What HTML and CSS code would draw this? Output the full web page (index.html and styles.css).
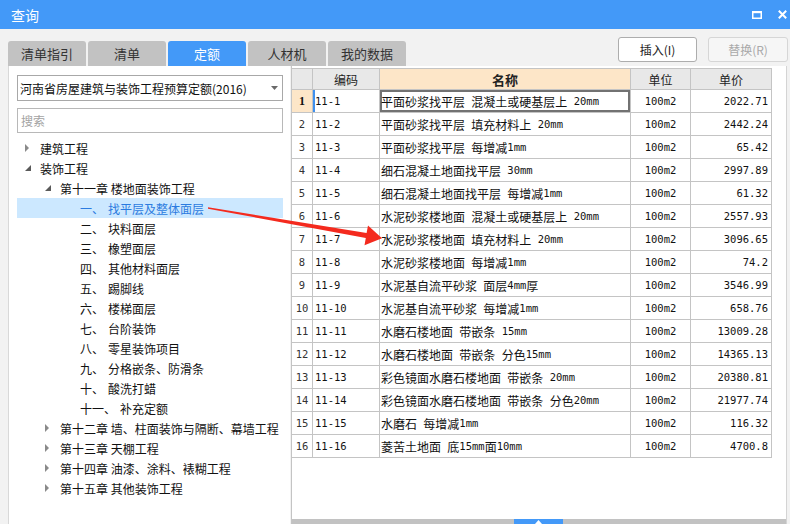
FILE: index.html
```html
<!DOCTYPE html>
<html lang="zh-CN">
<head>
<meta charset="utf-8">
<title>查询</title>
<link rel="stylesheet" href="styles.css">
</head>
<body>
<div class="titlebar">
  <span class="title">查询</span>
  <div class="winbtns">
    <svg class="ico-max" width="10" height="8" viewBox="0 0 10 8"><rect x="0.75" y="1" width="8.5" height="6.25" fill="none" stroke="#fff" stroke-width="1.5"/><rect x="0" y="0" width="10" height="2.2" fill="#fff"/></svg>
    <svg class="ico-close" width="9" height="9" viewBox="0 0 9 9"><path d="M0.8 0.8 L8.2 8.2 M8.2 0.8 L0.8 8.2" stroke="#fff" stroke-width="2"/></svg>
  </div>
</div>
<div class="toolbar">
  <div class="tabs">
    <div class="tab">清单指引</div>
    <div class="tab">清单</div>
    <div class="tab active">定额</div>
    <div class="tab">人材机</div>
    <div class="tab">我的数据</div>
  </div>
  <div class="actions">
    <div class="btn">插入(I)</div>
    <div class="btn disabled">替换(R)</div>
  </div>
</div>
<div class="main">
  <div class="left">
    <div class="select"><span>河南省房屋建筑与装饰工程预算定额(2016)</span><svg class="caret" width="7" height="4" viewBox="0 0 7 4"><polygon points="0,0 7,0 3.5,4" fill="#6a6a6a"/></svg></div>
    <div class="search">搜索</div>
    <div class="tree">
      <div class="row l0"><span class="tw"><svg width="5" height="8" viewBox="0 0 5 8"><polygon points="0,0 4,4 0,8" fill="#8a8a8a"/></svg></span>建筑工程</div>
      <div class="row l0"><span class="tw"><svg width="6" height="6" viewBox="0 0 6 6"><polygon points="6,0 6,6 0,6" fill="#5a5a5a"/></svg></span>装饰工程</div>
      <div class="row l1"><span class="tw"><svg width="6" height="6" viewBox="0 0 6 6"><polygon points="6,0 6,6 0,6" fill="#5a5a5a"/></svg></span>第十一章 楼地面装饰工程</div>
      <div class="row l2 sel"><span class="tw"></span><span class="num">一、</span>找平层及整体面层</div>
      <div class="row l2"><span class="tw"></span><span class="num">二、</span>块料面层</div>
      <div class="row l2"><span class="tw"></span><span class="num">三、</span>橡塑面层</div>
      <div class="row l2"><span class="tw"></span><span class="num">四、</span>其他材料面层</div>
      <div class="row l2"><span class="tw"></span><span class="num">五、</span>踢脚线</div>
      <div class="row l2"><span class="tw"></span><span class="num">六、</span>楼梯面层</div>
      <div class="row l2"><span class="tw"></span><span class="num">七、</span>台阶装饰</div>
      <div class="row l2"><span class="tw"></span><span class="num">八、</span>零星装饰项目</div>
      <div class="row l2"><span class="tw"></span><span class="num">九、</span>分格嵌条、防滑条</div>
      <div class="row l2"><span class="tw"></span><span class="num">十、</span>酸洗打蜡</div>
      <div class="row l2"><span class="tw"></span><span class="num">十一、</span>补充定额</div>
      <div class="row l1"><span class="tw"><svg width="5" height="8" viewBox="0 0 5 8"><polygon points="0,0 4,4 0,8" fill="#8a8a8a"/></svg></span>第十二章 墙、柱面装饰与隔断、幕墙工程</div>
      <div class="row l1"><span class="tw"><svg width="5" height="8" viewBox="0 0 5 8"><polygon points="0,0 4,4 0,8" fill="#8a8a8a"/></svg></span>第十三章 天棚工程</div>
      <div class="row l1"><span class="tw"><svg width="5" height="8" viewBox="0 0 5 8"><polygon points="0,0 4,4 0,8" fill="#8a8a8a"/></svg></span>第十四章 油漆、涂料、裱糊工程</div>
      <div class="row l1"><span class="tw"><svg width="5" height="8" viewBox="0 0 5 8"><polygon points="0,0 4,4 0,8" fill="#8a8a8a"/></svg></span>第十五章 其他装饰工程</div>
    </div>
  </div>
  <div class="right">
    <div class="grid">
      <div class="h"></div><div class="h">编码</div><div class="h hn">名称</div><div class="h">单位</div><div class="h">单价</div>

      <div class="c rn cur">1</div><div class="c code focus">11-1</div><div class="c name selcell">平面砂浆找平层<span class="a"> </span>混凝土或硬基层上<span class="a"> 20mm</span></div><div class="c unit">100m2</div><div class="c price">2022.71</div>
      <div class="c rn">2</div><div class="c code">11-2</div><div class="c name">平面砂浆找平层<span class="a"> </span>填充材料上<span class="a"> 20mm</span></div><div class="c unit">100m2</div><div class="c price">2442.24</div>
      <div class="c rn">3</div><div class="c code">11-3</div><div class="c name">平面砂浆找平层<span class="a"> </span>每增减<span class="a">1mm</span></div><div class="c unit">100m2</div><div class="c price">65.42</div>
      <div class="c rn">4</div><div class="c code">11-4</div><div class="c name">细石混凝土地面找平层<span class="a"> 30mm</span></div><div class="c unit">100m2</div><div class="c price">2997.89</div>
      <div class="c rn">5</div><div class="c code">11-5</div><div class="c name">细石混凝土地面找平层<span class="a"> </span>每增减<span class="a">1mm</span></div><div class="c unit">100m2</div><div class="c price">61.32</div>
      <div class="c rn">6</div><div class="c code">11-6</div><div class="c name">水泥砂浆楼地面<span class="a"> </span>混凝土或硬基层上<span class="a"> 20mm</span></div><div class="c unit">100m2</div><div class="c price">2557.93</div>
      <div class="c rn">7</div><div class="c code">11-7</div><div class="c name">水泥砂浆楼地面<span class="a"> </span>填充材料上<span class="a"> 20mm</span></div><div class="c unit">100m2</div><div class="c price">3096.65</div>
      <div class="c rn">8</div><div class="c code">11-8</div><div class="c name">水泥砂浆楼地面<span class="a"> </span>每增减<span class="a">1mm</span></div><div class="c unit">100m2</div><div class="c price">74.2</div>
      <div class="c rn">9</div><div class="c code">11-9</div><div class="c name">水泥基自流平砂浆<span class="a"> </span>面层<span class="a">4mm</span>厚</div><div class="c unit">100m2</div><div class="c price">3546.99</div>
      <div class="c rn">10</div><div class="c code">11-10</div><div class="c name">水泥基自流平砂浆<span class="a"> </span>每增减<span class="a">1mm</span></div><div class="c unit">100m2</div><div class="c price">658.76</div>
      <div class="c rn">11</div><div class="c code">11-11</div><div class="c name">水磨石楼地面<span class="a"> </span>带嵌条<span class="a"> 15mm</span></div><div class="c unit">100m2</div><div class="c price">13009.28</div>
      <div class="c rn">12</div><div class="c code">11-12</div><div class="c name">水磨石楼地面<span class="a"> </span>带嵌条<span class="a"> </span>分色<span class="a">15mm</span></div><div class="c unit">100m2</div><div class="c price">14365.13</div>
      <div class="c rn">13</div><div class="c code">11-13</div><div class="c name">彩色镜面水磨石楼地面<span class="a"> </span>带嵌条<span class="a"> 20mm</span></div><div class="c unit">100m2</div><div class="c price">20380.81</div>
      <div class="c rn">14</div><div class="c code">11-14</div><div class="c name">彩色镜面水磨石楼地面<span class="a"> </span>带嵌条<span class="a"> </span>分色<span class="a">20mm</span></div><div class="c unit">100m2</div><div class="c price">21977.74</div>
      <div class="c rn">15</div><div class="c code">11-15</div><div class="c name">水磨石<span class="a"> </span>每增减<span class="a">1mm</span></div><div class="c unit">100m2</div><div class="c price">116.32</div>
      <div class="c rn">16</div><div class="c code">11-16</div><div class="c name">菱苦土地面<span class="a"> </span>底<span class="a">15mm</span>面<span class="a">10mm</span></div><div class="c unit">100m2</div><div class="c price">4700.8</div>
    </div>
    <div class="hscroll"><div class="thumb"><svg width="7" height="4" viewBox="0 0 7 4"><polygon points="3.5,0 7,4 0,4" fill="#fff"/></svg></div></div>
  </div>
</div>
<svg class="annot" width="790" height="524" viewBox="0 0 790 524">
  <polygon points="208,207.3 366.6,232.9 368,225.5 382,238.2 364.5,245.2 365.8,237.9 208,208.7" fill="#f42a1e"/>
</svg>
</body>
</html>
```

FILE: styles.css
```css
* { box-sizing: border-box; }

body {
  margin: 0;
  width: 790px;
  height: 524px;
  overflow: hidden;
  position: relative;
  background: #f2f2f2;
  font-family: "Noto Sans CJK SC", "Noto Sans", sans-serif;
  color: #1a1a1a;
}

.titlebar {
  height: 29px;
  background: #4399f8;
  color: #fff;
  display: flex;
  align-items: center;
  justify-content: space-between;
  padding: 0 3px 0 11px;
}
.title { font-size: 14px; line-height: 1; }
.winbtns { display: flex; align-items: center; gap: 16px; }
.winbtns svg { display: block; }

.toolbar {
  height: 37px;
  display: flex;
  padding: 0 2px 0 8px;
}
.tabs {
  display: flex;
  gap: 2px;
  align-self: flex-end;
}
.tab {
  width: 78px;
  height: 25px;
  background: #c2c2c2;
  border-radius: 3px 3px 0 0;
  font-size: 13px;
  color: #333;
  display: flex;
  align-items: center;
  justify-content: center;
}
.tab.active { background: #4399f8; color: #fff; }

.actions {
  margin-left: auto;
  margin-top: 8px;
  display: flex;
  gap: 11px;
}
.btn {
  width: 79px;
  height: 25px;
  border: 1px solid #adadad;
  border-radius: 3px;
  background: #fff;
  font-size: 12px;
  color: #222;
  display: flex;
  align-items: center;
  justify-content: center;
}
.btn.disabled {
  width: 80px;
  color: #a9a9a9;
  border-color: #d6d6d6;
  background: #f6f6f6;
}

.main {
  height: 458px;
  display: flex;
  gap: 1px;
  padding: 0 3px 0 8px;
}

.left {
  width: 282px;
  background: #fff;
  border-left: 1px solid #d8d8d8;
  padding: 9px 7px 0 8px;
}
.select {
  height: 26px;
  border: 1px solid #a8a8a8;
  display: flex;
  align-items: center;
  padding: 0 4px 0 2px;
  font-size: 12px;
  color: #111;
}
.select .caret { margin-left: auto; display: block; }
.search {
  margin-top: 7px;
  height: 25px;
  border: 1px solid #b8b8b8;
  display: flex;
  align-items: center;
  padding-left: 3px;
  font-size: 12px;
  color: #a3a3a3;
}
.tree { margin-top: 5px; }
.row {
  height: 20px;
  display: flex;
  align-items: center;
  font-size: 12px;
  color: #111;
  white-space: nowrap;
}
.row.l0 { padding-left: 8px; }
.row.l1 { padding-left: 28px; }
.row.l2 { padding-left: 48px; }
.row .tw { width: 15px; flex: none; display: flex; align-items: center; }
.row .tw svg { display: block; }
.row .num { margin-right: 4px; }
.row.sel { background: #cce8ff; color: #2b7be0; }

.right {
  width: 496px;
  background: #fff;
  border-left: 1px solid #c4c4c4;
  border-right: 1px solid #d4d4d4;
  padding-top: 2px;
  display: flex;
  flex-direction: column;
}

.grid {
  display: grid;
  grid-template-columns: 21px 67px 251px 60px 81px;
  grid-template-rows: 22px;
  grid-auto-rows: 23px;
  width: 480px;
}
.grid > div {
  border-right: 1px solid #c4c4c4;
  border-bottom: 1px solid #c4c4c4;
  white-space: nowrap;
  overflow: hidden;
}
.h {
  border-top: 1px solid #c4c4c4;
  background: #e8e8e8;
  font-size: 12px;
  color: #222;
  display: flex;
  align-items: center;
  justify-content: center;
}
.h.hn { background: #fde6c8; font-weight: bold; font-size: 13px; }

.c {
  display: flex;
  align-items: center;
  font-size: 12px;
  color: #111;
}
.rn {
  justify-content: center;
  font-family: "DejaVu Sans Mono", monospace;
  font-size: 10.5px;
  color: #333;
}
.rn.cur { background: #fde6c8; font-weight: bold; font-family: "Liberation Serif", serif; font-size: 12px; color: #111; }
.code {
  padding-left: 2px;
  font-family: "DejaVu Sans Mono", monospace;
  font-size: 10.5px;
}
.code.focus { box-shadow: inset 2px 0 0 #3f90ee; }
.name { padding-left: 1px; }
.name .a {
  font-family: "DejaVu Sans Mono", monospace;
  font-size: 10.5px;
  white-space: pre;
}
.name.selcell { box-shadow: inset 0 0 0 2px #727272; }
.unit {
  justify-content: center;
  font-family: "DejaVu Sans Mono", monospace;
  font-size: 10.5px;
}
.price {
  justify-content: flex-end;
  padding-right: 3px;
  font-family: "DejaVu Sans Mono", monospace;
  font-size: 10.5px;
}

.hscroll {
  margin-top: auto;
  height: 5px;
  background: #c2c2c2;
}
.thumb {
  margin-left: 222px;
  width: 49px;
  height: 5px;
  background: #4399f8;
  display: flex;
  align-items: center;
  justify-content: center;
}
.thumb svg { display: block; }

.annot {
  position: absolute;
  left: 0;
  top: 0;
  pointer-events: none;
}
```
